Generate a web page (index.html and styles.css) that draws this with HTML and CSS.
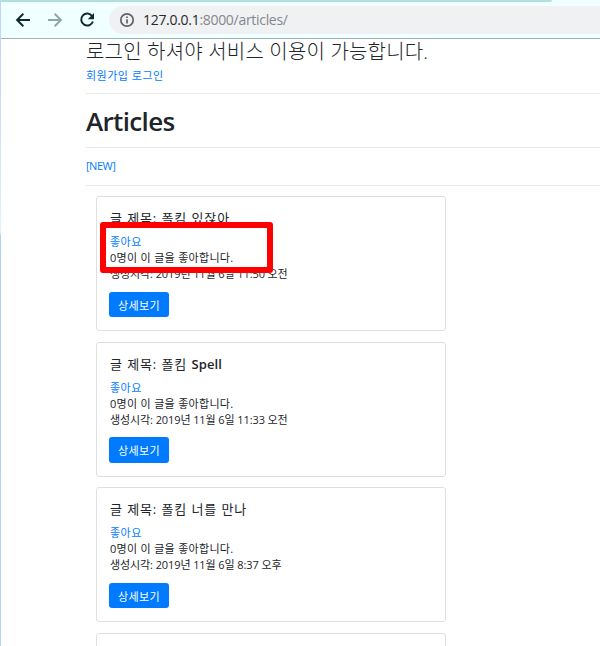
FILE: index.html
```html
<!DOCTYPE html>
<html lang="ko">
<head>
<meta charset="utf-8">
<title>Articles</title>
<link rel="stylesheet" href="styles.css">
</head>
<body>
<div class="window">
  <div class="edge"></div>
  <div class="view">
    <div class="tabs"><div class="tabs-fill"></div></div>
    <div class="toolbar">
      <svg class="nav back" width="16" height="16" viewBox="0 0 16 16"><path d="M15 8H2.5M8.3 1.8L2.1 8l6.2 6.2"/></svg>
      <svg class="nav forward" width="16" height="16" viewBox="0 0 16 16"><path d="M1 8h12.5M7.7 1.8L13.9 8l-6.2 6.2"/></svg>
      <svg class="nav reload" width="16" height="16" viewBox="0 0 16 16"><path d="M13.2 4.2A6 6 0 1 0 13.9 9.5"/><path class="solid" d="M15 1v6.2H8.8z"/></svg>
      <div class="address">
        <svg class="info" width="16" height="16" viewBox="0 0 16 16"><circle cx="8" cy="8" r="6.2"/><path d="M8 7.2v4.2M8 4.4v1.7"/></svg>
        <span class="url"><span class="host">127.0.0.1</span>:8000/articles/</span>
      </div>
    </div>
    <main class="page">
      <h3 class="notice">로그인 하셔야 서비스 이용이 가능합니다.</h3>
      <div class="account"><a href="#">회원가입</a> <a href="#">로그인</a></div>
      <hr>
      <h1>Articles</h1>
      <hr>
      <div class="new"><a href="#">[NEW]</a></div>
      <hr>
      <div class="cards">
        <article class="card">
          <h5>글 제목: 폴킴 있잖아</h5>
          <p><a class="like" href="#">좋아요</a></p>
          <p class="count">0명이 이 글을 좋아합니다.</p>
          <p class="time">생성시각: 2019년 11월 6일 11:50 오전</p>
          <a class="btn" href="#">상세보기</a>
          <div class="highlight"></div>
        </article>
        <article class="card">
          <h5>글 제목: 폴킴 <b>Spell</b></h5>
          <p><a class="like" href="#">좋아요</a></p>
          <p class="count">0명이 이 글을 좋아합니다.</p>
          <p class="time">생성시각: 2019년 11월 6일 11:33 오전</p>
          <a class="btn tall" href="#">상세보기</a>
        </article>
        <article class="card">
          <h5>글 제목: 폴킴 너를 만나</h5>
          <p><a class="like" href="#">좋아요</a></p>
          <p class="count">0명이 이 글을 좋아합니다.</p>
          <p class="time">생성시각: 2019년 11월 6일 8:37 오후</p>
          <a class="btn" href="#">상세보기</a>
        </article>
        <article class="card"></article>
      </div>
    </main>
  </div>
</div>
</body>
</html>
```
FILE: styles.css
```css
* { box-sizing: border-box; }
body {
  margin: 0;
  background: #fff;
  color: #212529;
  font-family: "Open Sans", "Noto Sans CJK KR", sans-serif;
  font-size: 11px;
}
.window { display: flex; width: 600px; height: 646px; overflow: hidden; }
.edge { width: 1px; background: linear-gradient(#bcd4fa 0, #c5dcfb 100px, #e6f1fd 233px, #add0f5 235px, #b4d4f8 100%); }
.view { flex: 1; min-width: 0; }
.tabs { height: 2px; background: #f0ffff; }
.tabs-fill { width: 551px; height: 2px; background: #b2dfdb; border-bottom-right-radius: 3px; }
.toolbar {
  display: flex;
  align-items: center;
  height: 37px;
  padding: 0 0 1px 14px;
  background: #f0ffff;
  border-bottom: 1px solid #a3b1b1;
}
.nav { fill: none; stroke: #102b2b; stroke-width: 2; margin-right: 16px; flex: none; }
.nav.forward { stroke: #8fa8a6; }
.nav.reload { margin-right: 14px; }
.nav .solid { fill: #102b2b; stroke: none; }
.address {
  display: flex;
  align-items: center;
  flex: 1;
  height: 28px;
  padding-left: 10px;
  background: #f0f1f3;
  border-radius: 14px 0 0 14px;
}
.info { fill: none; stroke: #5f6368; stroke-width: 1.7; margin-right: 8px; }
.url { font-size: 14px; color: #85888c; white-space: nowrap; letter-spacing: -0.3px; }
.host { color: #27292c; }
.page { padding-left: 85px; }
a { color: #007bff; text-decoration: none; }
hr { height: 1px; margin: 0; border: 0; background: #e9e9e9; }
h1, h3, h5, p { margin: 0; white-space: nowrap; }
.notice { height: 26px; line-height: 25px; font-size: 20px; font-weight: 300; letter-spacing: 0.18px; }
.account { height: 28px; line-height: 21px; letter-spacing: 0.5px; }
h1 { height: 53px; line-height: 55px; font-size: 26px; font-weight: 600; letter-spacing: -0.65px; }
.new { height: 37px; line-height: 36px; letter-spacing: -0.5px; }
.cards { display: flex; flex-direction: column; gap: 10.5px; padding: 10px 0 0 10px; }
.card {
  position: relative;
  width: 350px;
  height: 135px;
  padding: 11px 12px;
  border: 1px solid #dfdfdf;
  border-radius: 3px;
}
.card h5 { height: 26px; padding-left: 1px; line-height: 20px; font-size: 13px; font-weight: 400; letter-spacing: 0.9px; }
.card b { font-weight: 600; letter-spacing: 0.1px; }
.card p { height: 16px; padding-left: 1px; line-height: 16px; }
.like { letter-spacing: 0.5px; }
.count { letter-spacing: 0.3px; }
.time { letter-spacing: -0.1px; }
.btn {
  display: flex;
  align-items: center;
  justify-content: center;
  width: 60px;
  height: 25px;
  margin-top: 10px;
  color: #fff;
  background: #007bff;
  border-radius: 3px;
  letter-spacing: 0.4px;
}
.btn.tall { height: 26px; margin-top: 9px; }
.highlight {
  position: absolute;
  left: 3px;
  top: 25px;
  width: 173px;
  height: 51px;
  border: 6px solid #f00;
  border-radius: 3px;
}
```
